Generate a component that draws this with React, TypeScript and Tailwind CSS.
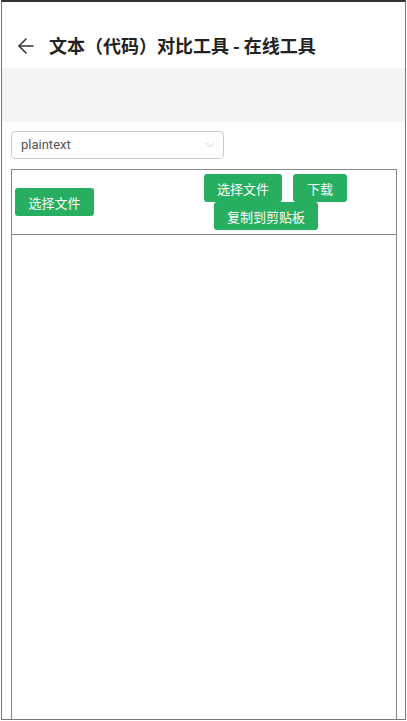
import { ArrowLeft, ChevronDown } from "lucide-react";

const font = { fontFamily: '"Noto Sans CJK SC", "Noto Sans", sans-serif' };

const Btn = ({ label, w }: { label: string; w: string }) => (
  <button
    className={`h-[28px] whitespace-nowrap rounded-[3px] bg-[#27ae60] text-[13px] leading-none text-white ${w}`}
  >
    {label}
  </button>
);

const App = () => {
  return (
    <div className="h-[721px] w-[407px] overflow-hidden bg-white pl-[1px]" style={font}>
      <div className="h-[720px] w-[405px] overflow-hidden border border-t-2 border-[#777] border-t-[#333]">
        {/* header */}
        <header className="flex h-[66px] items-end gap-[11px] px-[12px] pb-[9px]">
          <ArrowLeft className="mb-[1px] h-[24px] w-[24px] text-[#333]" strokeWidth={1.5} />
          <h1 className="text-[18px] font-bold text-[#222]">文本（代码）对比工具 - 在线工具</h1>
        </header>

        {/* ad band */}
        <div className="h-[54px] bg-[#f4f4f4]" />

        {/* language select */}
        <div className="px-[9px] pt-[9px]">
          <div className="flex h-[28px] w-[213px] items-center justify-between rounded-[4px] border border-[#ccc] pl-[9px] pr-[6px]">
            <span className="text-[13px] text-[#555]" style={{ fontFamily: "Roboto, sans-serif" }}>
              plaintext
            </span>
            <ChevronDown className="h-[14px] w-[14px] text-[#bbb]" strokeWidth={1.2} />
          </div>
        </div>

        {/* diff box */}
        <div className="ml-[9px] mt-[10px] h-[600px] w-[386px] border border-[#888]">
          <div className="flex h-[65px] border-b border-[#888]">
            <div className="flex w-[192px] items-center pl-[3px]">
              <Btn label="选择文件" w="w-[79px]" />
            </div>
            <div className="flex w-[192px] flex-col pt-[4px]">
              <div className="flex gap-[11px]">
                <Btn label="选择文件" w="w-[78px]" />
                <Btn label="下载" w="w-[54px]" />
              </div>
              <div className="pl-[10px]">
                <Btn label="复制到剪贴板" w="w-[104px]" />
              </div>
            </div>
          </div>
        </div>
      </div>
    </div>
  );
};

export default App;
